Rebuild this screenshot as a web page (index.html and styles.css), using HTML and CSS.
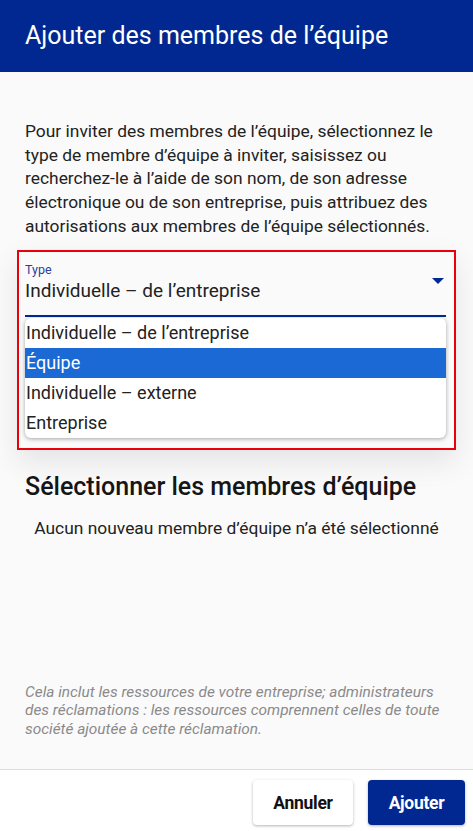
FILE: index.html
```html
<!doctype html>
<html lang="fr">
<head>
    <title>Ajouter des membres de l'équipe</title>
    <link rel="stylesheet" href="styles.css">
</head>
<body>
    <div class="dialog">
        <header class="dialog-header">
            <h1>Ajouter des membres de l’équipe</h1>
        </header>
        <main class="dialog-body">
            <p class="intro">Pour inviter des membres de l’équipe, sélectionnez le type de membre d’équipe à inviter, saisissez ou recherchez-le à l’aide de son nom, de son adresse électronique ou de son entreprise, puis attribuez des autorisations aux membres de l’équipe sélectionnés.</p>

            <div class="type-field">
                <div class="select">
                    <span class="select-label">Type</span>
                    <span class="select-value">Individuelle – de l’entreprise</span>
                    <svg class="select-arrow" width="12" height="6" viewBox="0 0 12 6"><path d="M0 0h12L6 6z" fill="#002890"/></svg>
                </div>
                <ul class="options">
                    <li>Individuelle – de l’entreprise</li>
                    <li class="selected">Équipe</li>
                    <li>Individuelle – externe</li>
                    <li>Entreprise</li>
                </ul>
            </div>

            <h2>Sélectionner les membres d’équipe</h2>
            <p class="empty">Aucun nouveau membre d’équipe n’a été sélectionné</p>

            <p class="note">Cela inclut les ressources de votre entreprise; administrateurs des réclamations : les ressources comprennent celles de toute société ajoutée à cette réclamation.</p>
        </main>
        <footer class="dialog-footer">
            <button class="btn btn-cancel">Annuler</button>
            <button class="btn btn-primary">Ajouter</button>
        </footer>
    </div>
</body>
</html>
```

FILE: styles.css
```css
html, body {
    margin: 0;
    height: 100%;
}
body {
    font-family: Roboto, "Liberation Sans", sans-serif;
    background: #fafafa;
    color: #222;
}
.dialog {
    display: flex;
    flex-direction: column;
    height: 100%;
}
.dialog-header {
    background: #002890;
    height: 72px;
    display: flex;
    align-items: center;
    padding: 0 25px;
    flex-shrink: 0;
}
.dialog-header h1 {
    margin: 0;
    color: #fff;
    font-size: 25px;
    font-weight: 400;
    padding-bottom: 2px;
}
.dialog-body {
    flex: 1;
    padding: 48px 25px 0;
    display: flex;
    flex-direction: column;
}
.intro {
    margin: 0;
    font-size: 17.4px;
    line-height: 23.7px;
    color: #222;
}
.type-field {
    margin: 11px -8px 0;
    border: 2px solid #e8000b;
    padding: 4px 8px 10px 6px;
    box-shadow: 0 12px 28px rgba(0, 0, 0, 0.09);
}
.select {
    position: relative;
    height: 61px;
    border-bottom: 2px solid #002890;
    display: flex;
    flex-direction: column;
    box-sizing: border-box;
    padding-top: 7px;
}
.select-label {
    font-size: 12.5px;
    color: #2b3f9a;
    line-height: 14px;
}
.select-value {
    font-size: 19px;
    line-height: 22px;
    margin-top: 3px;
}
.select-arrow {
    position: absolute;
    right: 2px;
    top: 22px;
}
.options {
    list-style: none;
    margin: 1px 0 0;
    padding: 0;
    background: #fff;
    border-radius: 6px;
    overflow: hidden;
    box-shadow: 0 1px 4px rgba(0, 0, 0, 0.35);
}
.options li {
    height: 30px;
    line-height: 30px;
    font-size: 18px;
    padding-left: 1px;
    color: #222;
}
.options li.selected {
    background: #1a69d4;
    color: #fff;
}
h2 {
    margin: 22px 0 0;
    font-size: 25px;
    font-weight: 500;
    color: #151515;
}
.empty {
    margin: 17px 0 0;
    text-align: center;
    font-size: 17.4px;
}
.note {
    margin: auto 0 31px;
    font-size: 15.4px;
    line-height: 18.3px;
    font-style: italic;
    color: #8a8a8a;
}
.dialog-footer {
    flex-shrink: 0;
    background: #fff;
    border-top: 1px solid #ddd;
    height: 62px;
    display: flex;
    justify-content: flex-end;
    align-items: flex-start;
    gap: 15px;
    padding: 10px 8px 0;
    box-sizing: border-box;
}
.btn {
    height: 45px;
    border: none;
    border-radius: 4px;
    font-family: Roboto, "Liberation Sans", sans-serif;
    font-size: 17.5px;
    font-weight: 700;
    letter-spacing: -0.3px;
    padding: 0;
    cursor: pointer;
}
.btn-cancel {
    background: #fff;
    color: #111;
    width: 100px;
    box-shadow: 0 1px 3px rgba(0, 0, 0, 0.3);
}
.btn-primary {
    background: #002890;
    color: #fff;
    width: 97px;
    box-shadow: 0 1px 3px rgba(0, 0, 0, 0.3);
}
```
